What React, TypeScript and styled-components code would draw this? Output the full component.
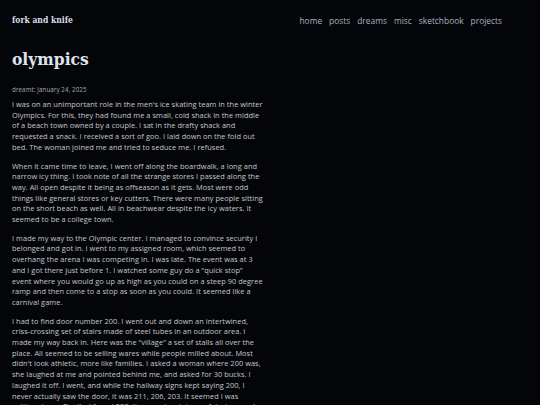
import React from "react";
import styled, { createGlobalStyle } from "styled-components";

const Global = createGlobalStyle`
  html, body { margin: 0; padding: 0; background: #040508; }
  body { font-family: "Open Sans", "Noto Sans", sans-serif; }
`;

const Page = styled.div`
  min-height: 405px;
  background: #040508;
  color: #c4c8cf;
  padding: 0 12px;
  box-sizing: border-box;
`;

const Header = styled.header`
  display: flex;
  align-items: center;
  justify-content: space-between;
  height: 40px;
  padding-right: 26px;
`;

const SiteTitle = styled.a`
  font-family: "DejaVu Serif", serif;
  font-stretch: semi-condensed;
  font-weight: bold;
  font-size: 8.5px;
  color: #d9dee8;
  text-decoration: none;
`;

const Nav = styled.nav`
  display: flex;
  gap: 7px;
`;

const NavLink = styled.a`
  font-family: "Open Sans", sans-serif;
  font-size: 8.4px;
  color: #a9b1c2;
  text-decoration: none;
`;

const Article = styled.article`
  max-width: 252px;
`;

const Title = styled.h1`
  font-family: "DejaVu Serif", serif;
  font-stretch: semi-condensed;
  font-weight: bold;
  font-size: 17.3px;
  color: #dde3ee;
  margin: 8px 0 0;
  line-height: 22px;
`;

const Meta = styled.div`
  font-size: 6.2px;
  letter-spacing: 0.1px;
  color: #a6abb5;
  margin-top: 15px;
`;

const Para = styled.p`
  font-size: 7.4px;
  letter-spacing: 0.05px;
  line-height: 10.7px;
  margin: 8px 0 0;
  color: #c4c8cf;

  &:first-of-type {
    margin-top: 5px;
  }
`;

const paras = [
  "I was on an unimportant role in the men's ice skating team in the winter Olympics. For this, they had found me a small, cold shack in the middle of a beach town owned by a couple. I sat in the drafty shack and requested a snack. I received a sort of goo. I laid down on the fold out bed. The woman joined me and tried to seduce me. I refused.",
  "When it came time to leave, I went off along the boardwalk, a long and narrow icy thing. I took note of all the strange stores I passed along the way. All open despite it being as offseason as it gets. Most were odd things like general stores or key cutters. There were many people sitting on the short beach as well. All in beachwear despite the icy waters. It seemed to be a college town.",
  "I made my way to the Olympic center. I managed to convince security I belonged and got in. I went to my assigned room, which seemed to overhang the arena I was competing in. I was late. The event was at 3 and I got there just before 1. I watched some guy do a \u201cquick stop\u201d event where you would go up as high as you could on a steep 90 degree ramp and then come to a stop as soon as you could. It seemed like a carnival game.",
  "I had to find door number 200. I went out and down an intertwined, criss-crossing set of stairs made of steel tubes in an outdoor area. I made my way back in. Here was the \u201cvillage\u201d a set of stalls all over the place. All seemed to be selling wares while people milled about. Most didn't look athletic, more like families. I asked a woman where 200 was, she laughed at me and pointed behind me, and asked for 30 bucks. I laughed it off. I went, and while the hallway signs kept saying 200, I never actually saw the door, it was 211, 206, 203. It seemed I was getting closer. Finally, I found 200. It opened up into a cafeteria, people milled about.",
];

const links = ["home", "posts", "dreams", "misc", "sketchbook", "projects"];

export default function App() {
  return (
    <Page>
      <Global />
      <Header>
        <SiteTitle href="#">fork and knife</SiteTitle>
        <Nav>
          {links.map((l) => (
            <NavLink key={l} href="#">{l}</NavLink>
          ))}
        </Nav>
      </Header>
      <Article>
        <Title>olympics</Title>
        <Meta>dreamt: January 24, 2025</Meta>
        {paras.map((p, i) => (
          <Para key={i}>{p}</Para>
        ))}
      </Article>
    </Page>
  );
}
